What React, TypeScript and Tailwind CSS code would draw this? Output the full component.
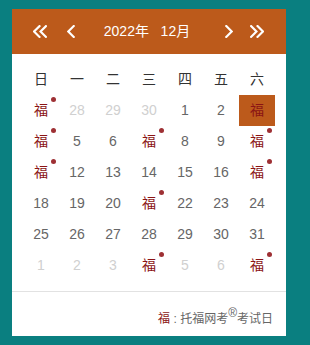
const weekdays = ["日", "一", "二", "三", "四", "五", "六"];

type Cell = { label: string; muted?: boolean; fu?: boolean; dot?: boolean; active?: boolean };

const n = (label: string | number, muted = false): Cell => ({ label: String(label), muted });
const fu = (dot = true, active = false): Cell => ({ label: "福", fu: true, dot, active });

const rows: Cell[][] = [
  [fu(), n(28, true), n(29, true), n(30, true), n(1), n(2), fu(false, true)],
  [fu(), n(5), n(6), fu(), n(8), n(9), fu()],
  [fu(), n(12), n(13), n(14), n(15), n(16), fu()],
  [n(18), n(19), n(20), fu(), n(22), n(23), n(24)],
  [n(25), n(26), n(27), n(28), n(29), n(30), n(31)],
  [n(1, true), n(2, true), n(3, true), fu(), n(5, true), n(6, true), fu()],
];

function Chevron({ dir, double }: { dir: "left" | "right"; double?: boolean }) {
  const pts = dir === "left" ? ["6,1 1,6 6,11"] : ["1,1 6,6 1,11"];
  if (double) pts.push(dir === "left" ? "12,1 7,6 12,11" : "7,1 12,6 7,11");
  return (
    <svg width={double ? 14 : 8} height="13" viewBox={double ? "0 0 13 12" : "0 0 7 12"} fill="none" stroke="white" strokeWidth="2" strokeLinecap="square">
      {pts.map((p) => (
        <polyline key={p} points={p} />
      ))}
    </svg>
  );
}

export default function App() {
  return (
    <div className="w-[310px] h-[345px] bg-[#0a7f80] pt-[9px] pl-[12px]" style={{ fontFamily: '"Liberation Sans", "Noto Sans CJK SC", sans-serif' }}>
      <div className="w-[274px] h-[327px] bg-white flex flex-col">
        <div className="h-[45px] bg-[#bc5a1b] flex items-center text-white text-[14px]">
          <div className="ml-[21px] flex items-center"><Chevron dir="left" double /></div>
          <div className="ml-[20px] flex items-center"><Chevron dir="left" /></div>
          <div className="flex-1 text-center pr-[6px]">2022年&nbsp;&nbsp;&nbsp;12月</div>
          <div className="mr-[17px] flex items-center"><Chevron dir="right" /></div>
          <div className="mr-[22px] flex items-center"><Chevron dir="right" double /></div>
        </div>
        <div className="px-[11px] pt-[10px] pb-[10px] border-b border-[#e2e2e2]">
          <div className="grid grid-cols-7 h-[31px] items-center text-center text-[14px] text-[#333]">
            {weekdays.map((w) => (
              <div key={w}>{w}</div>
            ))}
          </div>
          {rows.map((row, i) => (
            <div key={i} className="grid grid-cols-7">
              {row.map((c, j) => (
                <div
                  key={j}
                  className={`relative h-[31px] flex items-center justify-center text-[14px] ${c.active ? "bg-[#bc5a1b]" : ""} ${c.fu ? "text-[#8b1414]" : c.muted ? "text-[#d0d0d0]" : "text-[#666]"}`}
                >
                  {c.label}
                  {c.dot && <span className="absolute top-[2px] right-[3px] w-[5px] h-[5px] rounded-full bg-[#9e3034]" />}
                </div>
              ))}
            </div>
          ))}
        </div>
        <div className="pt-[18px] pr-[13px] text-right text-[12px] leading-[18px] text-[#666]">
          <span className="text-[#8b1414]">福</span> : 托福网考<sup className="text-[12px]">®</sup>考试日
        </div>
      </div>
    </div>
  );
}
